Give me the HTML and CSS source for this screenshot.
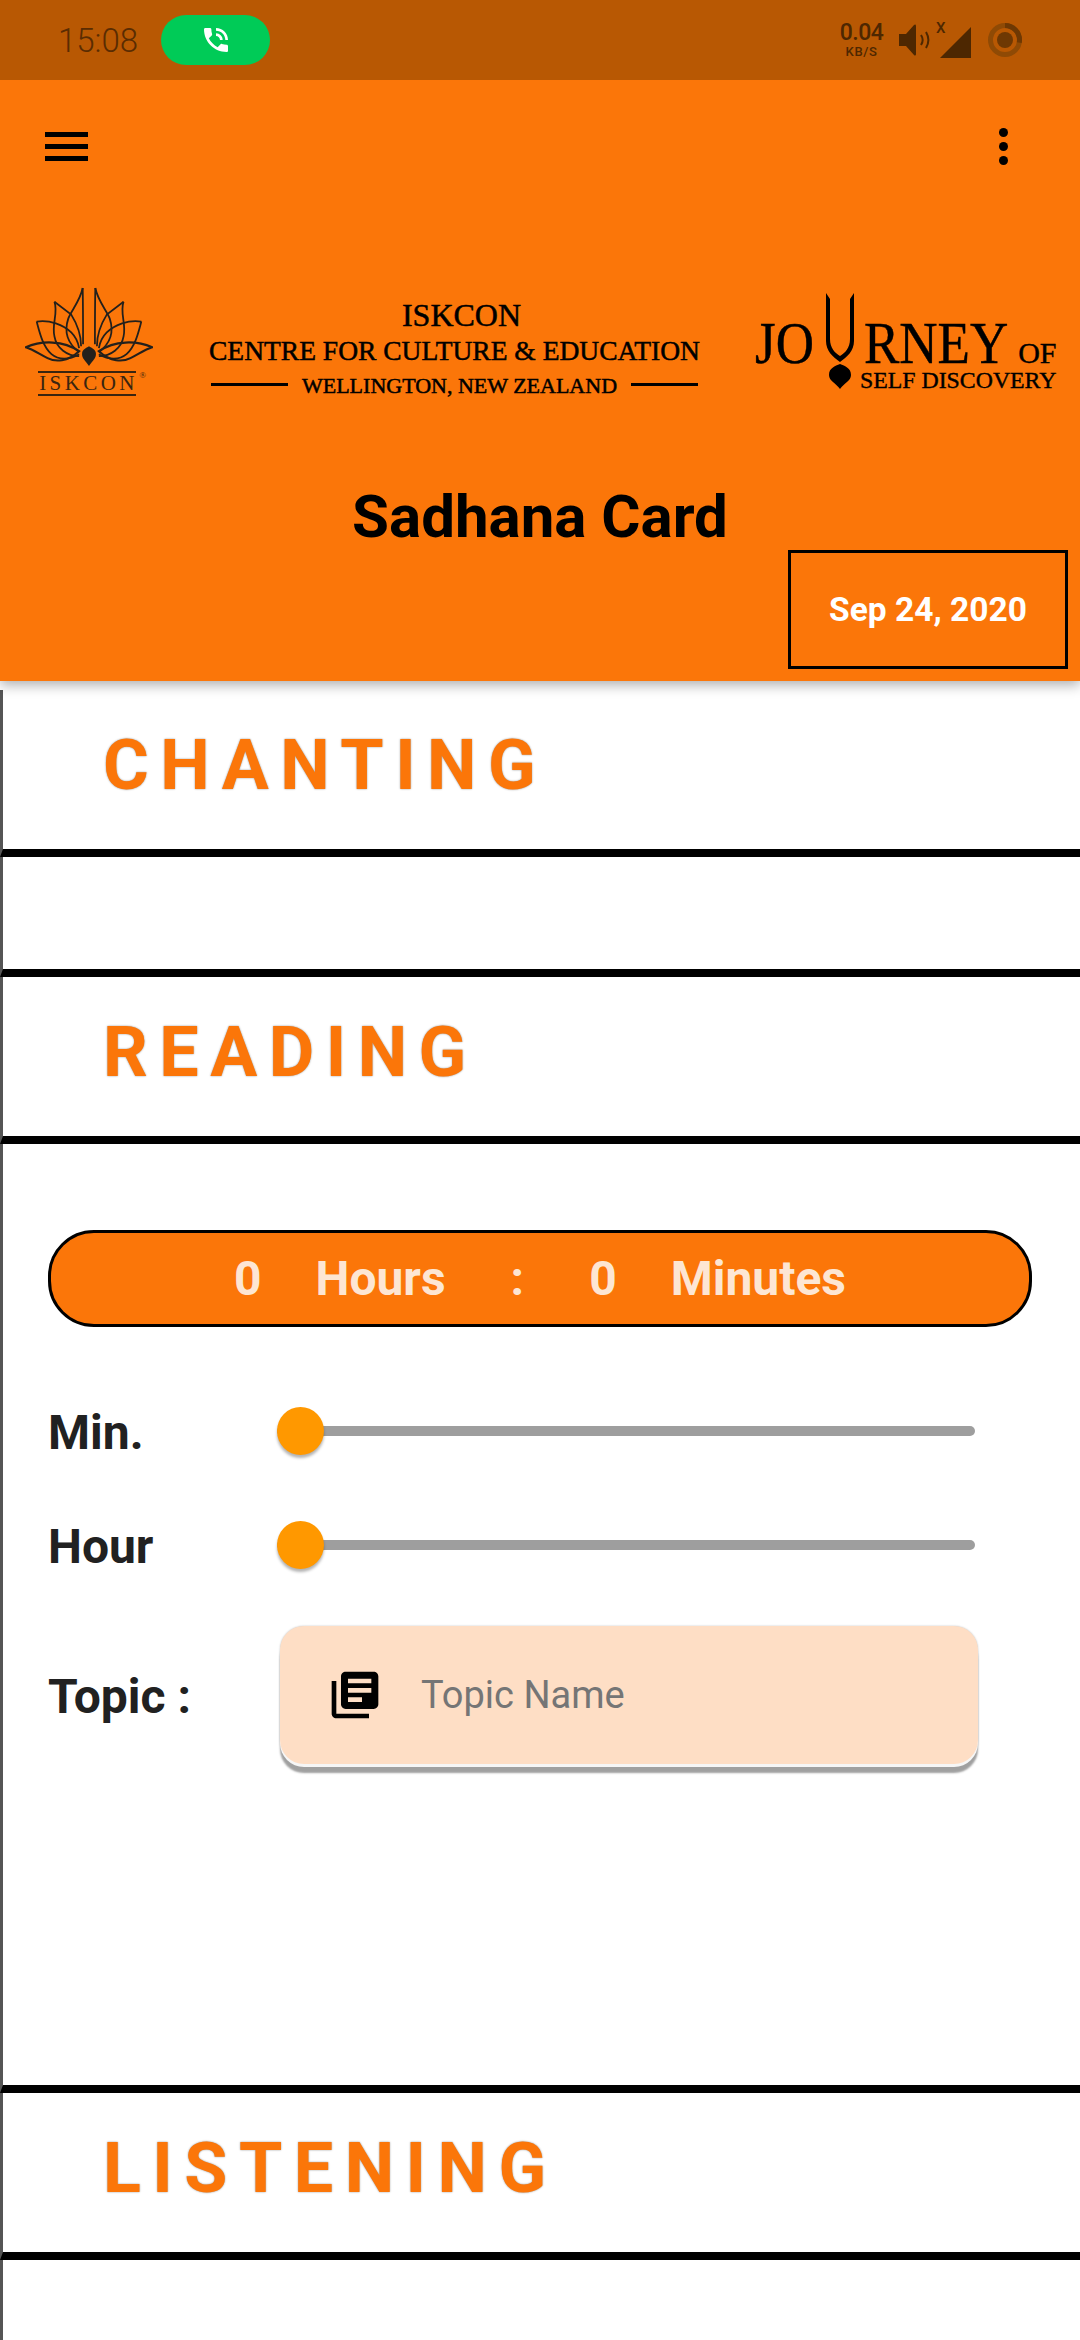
FILE: index.html
```html
<!DOCTYPE html>
<html lang="en">
<head>
<meta charset="utf-8">
<title>Sadhana Card</title>
<link rel="stylesheet" href="styles.css">
</head>
<body>
<div class="page">
  <header class="header">
    <div class="status">
      <span class="clock">15:08</span>
      <span class="call">
        <svg class="call-icon" viewBox="0 0 24 24"><path d="M20 15.5c-1.25 0-2.45-.2-3.57-.57-.35-.11-.74-.03-1.02.24l-2.2 2.2c-2.83-1.44-5.15-3.75-6.59-6.59l2.2-2.21c.28-.26.36-.65.25-1C8.7 6.45 8.5 5.25 8.5 4c0-.55-.45-1-1-1H4c-.55 0-1 .45-1 1 0 9.39 7.61 17 17 17 .55 0 1-.45 1-1v-3.5c0-.55-.45-1-1-1zM19 12h2c0-4.97-4.03-9-9-9v2c3.87 0 7 3.13 7 7zm-4 0h2c0-2.76-2.24-5-5-5v2c1.66 0 3 1.34 3 3z"/></svg>
      </span>
      <div class="status-right">
        <div class="speed"><span class="speed-val">0.04</span><span class="speed-unit">KB/S</span></div>
        <svg class="speaker" viewBox="0 0 32 32"><path class="st-fill" d="M0 10h7L15 1c1-1 2-.5 2 1v28c0 1.500-1 2-2 1L7 22H0z"/><path class="st-line" d="M22 11c2 3 2 7 0 10M27 8c3 5 3 11 0 16" /></svg>
        <div class="signal">
          <span class="signal-x">X</span>
          <svg class="signal-tri" viewBox="0 0 31 31"><path class="st-fill" d="M31 0v31H0z"/></svg>
        </div>
        <svg class="ring" viewBox="0 0 36 36"><circle class="ring-outer" cx="18" cy="18" r="14.500"/><circle class="ring-arc" cx="18" cy="18" r="14.500" pathLength="100" stroke-dasharray="28 72" transform="rotate(-90 18 18)"/><circle class="ring-dot" cx="18" cy="18" r="8"/></svg>
      </div>
    </div>
    <div class="toolbar">
      <div class="burger"><span></span><span></span><span></span></div>
      <div class="kebab"><span></span><span></span><span></span></div>
    </div>
    <div class="logos">
      <div class="lotus-logo">
        <svg class="lotus" viewBox="0 0 128 80">
          <defs>
            <g id="petals">
              <path d="M57.600 1C58 22 58 46 58 58"/>
              <path d="M57.600 1C55 14 46 24 43 32C39 44 41 56 54 66"/>
              <path d="M29 15L46 28C51 36 56 47 56 60"/>
              <path d="M29 15C33 26 26 38 29 50C31 62 42 70 54 70"/>
              <path d="M11 35C24 33 38 38 46 46C50 50 53 56 54 62"/>
              <path d="M11 35C14 46 17 60 26 68C33 74 44 74 54 68"/>
              <path class="thick" d="M0 61C16 54 38 54 54 65C42 76 30 76 22 72C14 68 7 63 0 61z"/>
            </g>
          </defs>
          <use href="#petals"/>
          <use href="#petals" transform="matrix(-1 0 0 1 128 0)"/>
          <path class="lotus-drop" d="M64 80C60 74 56.500 72 57 67C57.500 63 61 62 64 60C67 62 70.500 63 71 67C71.500 72 68 74 64 80z"/>
        </svg>
        <div class="lotus-name"><span class="lotus-text">ISKCON</span><span class="reg">®</span></div>
      </div>
      <div class="centre-logo">
        <div class="c-top">ISKCON</div>
        <div class="c-mid">CENTRE FOR CULTURE &amp; EDUCATION</div>
        <div class="c-bottom"><span class="c-rule"></span><span class="c-place">WELLINGTON, NEW ZEALAND</span><span class="c-rule"></span></div>
      </div>
      <div class="journey-logo">
        <div class="j-word">
          <span class="j-big">JO</span>
          <svg class="tilak" viewBox="0 0 30 96"><path d="M1 0L5 6V46C5 55 10 60 15 63C20 60 25 55 25 46V6L29 0V48C29 58 22 64 15 69C8 64 1 58 1 48z"/><path d="M15 71C10 73 4 75 4 82C4 88 11 90 15 96C19 90 26 88 26 82C26 75 20 73 15 71z"/></svg>
          <span class="j-big j-rest">RNEY</span>
          <span class="j-of">OF</span>
        </div>
        <div class="j-sub">SELF DISCOVERY</div>
      </div>
    </div>
    <h1 class="title">Sadhana Card</h1>
    <div class="date-row"><div class="date">Sep 24, 2020</div></div>
  </header>

  <main class="list">
    <section class="row head-row"><h2 class="heading h-chant">CHANTING</h2></section>
    <section class="row empty-row"></section>
    <section class="row head-row"><h2 class="heading h-read">READING</h2></section>
    <section class="row panel">
      <div class="pill">
        <span>0</span><span>Hours</span><span class="colon">:</span><span>0</span><span>Minutes</span>
      </div>
      <div class="slider-row">
        <span class="label">Min.</span>
        <div class="slider"><span class="track"></span><span class="thumb"></span></div>
      </div>
      <div class="slider-row slider-row-2">
        <span class="label">Hour</span>
        <div class="slider"><span class="track"></span><span class="thumb"></span></div>
      </div>
      <div class="topic-row">
        <span class="label">Topic :</span>
        <div class="field">
          <svg class="book" viewBox="0 0 24 24"><path d="M4 6H2v14c0 1.100.9 2 2 2h14v-2H4V6zm16-4H8c-1.100 0-2 .9-2 2v12c0 1.100.9 2 2 2h12c1.100 0 2-.9 2-2V4c0-1.100-.9-2-2-2zm-1 9H9V9h10v2zm-4 4H9v-2h6v2zm4-8H9V5h10v2z"/></svg>
          <span class="placeholder">Topic Name</span>
        </div>
      </div>
    </section>
    <section class="row head-row"><h2 class="heading h-listen">LISTENING</h2></section>
    <section class="row tail-row"></section>
  </main>
</div>
</body>
</html>
```
FILE: styles.css
```css
* { box-sizing: border-box; }
html, body { margin: 0; padding: 0; background: #fff; }
.page {
  width: 1080px;
  height: 2340px;
  overflow: hidden;
  display: flex;
  flex-direction: column;
  font-family: Roboto, "Liberation Sans", sans-serif;
}

/* Header */
.header {
  height: 681px;
  flex: none;
  background: #fb7609;
  box-shadow: 0 4px 12px rgba(0, 0, 0, .32);
  position: relative;
  z-index: 2;
}
.status {
  height: 80px;
  background: #b85803;
  display: flex;
  align-items: center;
  padding: 0 57px 0 58px;
  color: #5a2c02;
}
.clock { font-size: 33px; font-weight: 300; width: 103px; }
.call {
  width: 109px;
  height: 50px;
  border-radius: 25px / 25px;
  background: #00cb57;
  display: flex;
  align-items: center;
  justify-content: center;
}
.call-icon { width: 32px; height: 32px; fill: #fff; }
.status-right { margin-left: auto; display: flex; align-items: center; }
.speed { display: flex; flex-direction: column; align-items: center; width: 45px; color: #4d2701; }
.speed-val { font-size: 23px; font-weight: 500; line-height: 24px; letter-spacing: -.5px; }
.speed-unit { font-size: 13px; font-weight: 500; line-height: 14px; letter-spacing: .6px; }
.speaker { width: 32px; height: 32px; margin-left: 15px; }
.st-fill { fill: #4d2701; }
.st-line { fill: none; stroke: #4d2701; stroke-width: 2; }
.signal { width: 33px; height: 36px; margin-left: 7px; position: relative; display: flex; justify-content: flex-end; align-items: flex-end; }
.signal-x { position: absolute; left: -2px; top: -3px; font-size: 15px; font-weight: 500; line-height: 18px; color: #4d2701; }
.signal-tri { width: 31px; height: 31px; }
.ring { width: 36px; height: 36px; margin-left: 16px; }
.ring-outer { fill: none; stroke: #8f4a05; stroke-width: 5; }
.ring-arc { fill: none; stroke: #6e3803; stroke-width: 5; }
.ring-dot { fill: #6e3803; }

.toolbar {
  height: 132px;
  display: flex;
  justify-content: space-between;
  align-items: center;
  padding: 0 72px 0 45px;
}
.burger { width: 43px; display: flex; flex-direction: column; gap: 7px; }
.burger span { height: 5px; background: #000; }
.kebab { width: 9px; display: flex; flex-direction: column; gap: 5px; }
.kebab span { height: 9px; border-radius: 50%; background: #000; }

/* Logos */
.logos {
  margin-top: 75px;
  height: 109px;
  display: flex;
  padding-left: 25px;
}
.lotus-logo { width: 128px; display: flex; flex-direction: column; align-items: center; }
.lotus { width: 128px; height: 80px; display: block; fill: none; stroke: #23201c; stroke-width: 1.800; }
.lotus .thick { stroke-width: 2.200; }
.lotus-drop { fill: #23201c; stroke: none; }
.lotus-name {
  margin-top: 5px;
  width: 98px;
  height: 25px;
  margin-left: -4px;
  border-top: 2px solid #3a2510;
  border-bottom: 2px solid #3a2510;
  position: relative;
  display: flex;
  align-items: center;
  justify-content: center;
  font-family: "Liberation Serif", serif;
  color: #3a2510;
}
.lotus-text { font-size: 21px; letter-spacing: 3.400px; line-height: 21px; margin-right: -3px; }
.reg { position: absolute; right: -10px; top: -3px; font-size: 9px; line-height: 10px; }

.centre-logo {
  margin-left: 58px;
  width: 487px;
  font-family: "Liberation Serif", serif;
  color: #000;
  -webkit-text-stroke: .5px #000;
  display: flex;
  flex-direction: column;
  align-items: center;
  padding-top: 12px;
}
.c-top { font-size: 32px; line-height: 32px; margin-left: 14px; }
.c-mid { font-size: 27.500px; line-height: 32px; white-space: nowrap; margin-top: 4px; }
.c-bottom { display: flex; align-items: center; width: 100%; justify-content: space-between; margin-top: 3px; }
.c-rule { width: 77px; height: 3px; background: #000; }
.c-rule:last-child { width: 67px; }
.c-place { font-size: 22px; line-height: 24px; white-space: nowrap; margin-top: 4px; }

.journey-logo {
  margin-left: 57px;
  width: 302px;
  height: 102px;
  font-family: "Liberation Serif", serif;
  color: #000;
  -webkit-text-stroke: .4px #000;
  position: relative;
  padding-top: 6px;
}
.j-word { display: flex; align-items: baseline; height: 72px; padding-top: 30px; }
.j-big { font-size: 53px; line-height: 44px; white-space: nowrap; transform: scaleY(1.120); transform-origin: 0 40px; }
.tilak { position: absolute; left: 70px; top: 6px; width: 30px; height: 96px; fill: #000; }
.j-word .j-rest { margin-left: 50px; }
.j-of { font-size: 30px; line-height: 38px; margin-left: 10px; white-space: nowrap; }
.j-sub { font-size: 23.800px; line-height: 24px; margin: 3px 0 0 105px; white-space: nowrap; }

.title {
  margin: 87px 0 0;
  height: 67px;
  text-align: center;
  font-size: 60px;
  line-height: 67px;
  font-weight: 700;
  color: #000;
}
.date-row { display: flex; justify-content: flex-end; padding-right: 12px; }
.date {
  width: 280px;
  height: 119px;
  border: 3px solid #000;
  display: flex;
  align-items: center;
  justify-content: center;
  color: #fff;
  font-size: 33.500px;
  font-weight: 700;
}

/* List */
.list { flex: 1; margin-top: 9px; display: flex; flex-direction: column; }
.row { flex: none; border-left: 3px solid #555; border-bottom: 8px solid #000; }
.head-row { height: 167px; display: flex; align-items: center; padding: 0 0 10px 100px; }
.empty-row { height: 120px; }
.tail-row { flex: 1; border-bottom: 0; }
.heading {
  margin: 0;
  font-size: 70px;
  font-weight: 700;
  line-height: 80px;
  letter-spacing: 11.500px;
  color: #fb7609;
  text-shadow: 0 0 2px rgba(0, 0, 0, .45);
}

/* Panel */
.panel { height: 949px; padding: 86px 0 0 45px; }
.pill {
  width: 984px;
  height: 97px;
  border: 3px solid #000;
  border-radius: 46px;
  background: #fb7609;
  display: flex;
  align-items: center;
  justify-content: center;
  gap: 54px;
  color: #fde6d3;
  font-size: 48px;
  font-weight: 700;
}
.colon { margin: 0 11px; }
.slider-row { height: 48px; margin-top: 80px; display: flex; align-items: center; }
.slider-row-2 { margin-top: 66px; }
.label { width: 229px; padding-top: 3px; font-size: 48px; font-weight: 700; color: #212121; line-height: 54px; white-space: nowrap; }
.slider { width: 698px; height: 48px; position: relative; display: flex; align-items: center; }
.track { display: block; width: 100%; height: 10px; border-radius: 5px; background: #9e9e9e; }
.thumb {
  position: absolute;
  left: 0;
  top: 0;
  width: 47px;
  height: 48px;
  border-radius: 50%;
  background: #ff9800;
  box-shadow: 0 3px 3px rgba(0, 0, 0, .3);
}
.topic-row { margin-top: 57px; display: flex; align-items: center; }
.field {
  width: 698px;
  height: 138px;
  margin-left: 3px;
  border-radius: 24px;
  background: #fedec5;
  box-shadow: 0 3px 0 #f6f6f6, 0 9px 2px #a0a0a0, 0 0 2px rgba(0, 0, 0, .25);
  display: flex;
  align-items: center;
  padding-left: 47px;
}
.book { width: 56px; height: 56px; fill: #000; flex: none; }
.placeholder { margin-left: 38px; font-size: 38px; color: #757575; }
```
